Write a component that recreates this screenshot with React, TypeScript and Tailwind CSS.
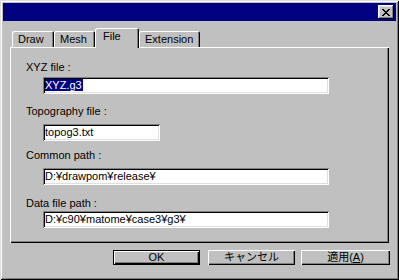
import React from "react";

const tabs = [
  { label: "Draw", w: "w-[42px]", active: false },
  { label: "Mesh", w: "w-[41px]", active: false },
  { label: "File", w: "w-[44px]", active: true },
  { label: "Extension", w: "w-[61px]", active: false },
];

const xPixels = [
  "##....##",
  ".##..##.",
  "..####..",
  "...##...",
  "..####..",
  ".##..##.",
  "##....##",
];

function CloseGlyph() {
  return (
    <svg width="8" height="7" viewBox="0 0 8 7" shapeRendering="crispEdges">
      {xPixels.flatMap((row, y) =>
        row.split("").map((c, x) =>
          c === "#" ? <rect key={`${x}-${y}`} x={x} y={y} width="1" height="1" fill="#000" /> : null
        )
      )}
    </svg>
  );
}

function Field({ value, width, selected }: { value: string; width: string; selected?: boolean }) {
  return (
    <div
      className={`ml-[33px] h-[17px] ${width} bg-white pl-[2px] pt-[2px] text-[11px] leading-[13px] text-black shadow-[inset_1px_1px_#808080,inset_-1px_-1px_#fff,inset_2px_2px_#000,inset_-2px_-2px_#dfdfdf]`}
    >
      {selected ? <span className="bg-[#000080] pr-[1px] text-white">{value}</span> : value}
    </div>
  );
}

function Label({ children, className = "" }: { children: React.ReactNode; className?: string }) {
  return <p className={`ml-[16px] text-[11px] leading-[14px] text-black ${className}`}>{children}</p>;
}

function Button({
  children,
  className,
  isDefault,
}: {
  children: React.ReactNode;
  className: string;
  isDefault?: boolean;
}) {
  return (
    <button
      className={`block h-[15px] ${className} bg-[#c0c0c0] p-0 text-center text-[11px] leading-[15px] text-black ${
        isDefault
          ? "shadow-[inset_0_0_0_1px_#000,inset_2px_2px_#fff,inset_-2px_-2px_#000,inset_-3px_-3px_#808080]"
          : "shadow-[inset_1px_1px_#fff,inset_-1px_-1px_#000,inset_-2px_-2px_#808080]"
      }`}
    >
      {children}
    </button>
  );
}

export default function App() {
  return (
    <div className="flex h-[280px] w-[399px] flex-col bg-[#c0c0c0] p-[3px] font-['Liberation_Sans','Noto_Sans_CJK_JP',sans-serif] shadow-[inset_1px_1px_#dfdfdf,inset_-1px_-1px_#000,inset_2px_2px_#fff,inset_-2px_-2px_#808080]">
      <div className="flex h-[18px] items-start justify-end bg-[#000080] pr-[2px] pt-[2px]">
        <div className="flex h-[14px] w-[16px] items-center justify-center bg-[#c0c0c0] shadow-[inset_-1px_-1px_#000,inset_1px_1px_#fff,inset_-2px_-2px_#808080,inset_2px_2px_#dfdfdf]">
          <CloseGlyph />
        </div>
      </div>

      <div className="ml-[7px] mt-[7px] w-[379px]">
        <div className="flex h-[19px] items-end pl-[2px]">
          {tabs.map((t) =>
            t.active ? (
              <div
                key={t.label}
                className={`relative z-10 mb-[-1px] h-[20px] ${t.w} rounded-t-[2px] bg-[#c0c0c0] pl-[8px] pt-[1px] text-[11px] leading-[14px] text-black shadow-[inset_1px_1px_#fff,inset_-1px_0_#000,inset_-2px_0_#808080]`}
              >
                {t.label}
              </div>
            ) : (
              <div
                key={t.label}
                className={`h-[16px] ${t.w} rounded-t-[2px] bg-[#c0c0c0] pl-[6px] pt-[1px] text-[11px] leading-[14px] text-black shadow-[inset_1px_1px_#fff,inset_-1px_0_#000,inset_-2px_0_#808080]`}
              >
                {t.label}
              </div>
            )
          )}
        </div>

        <div className="flex h-[196px] flex-col pt-[13px] shadow-[inset_1px_1px_#fff,inset_-1px_-1px_#000,inset_-2px_-2px_#808080]">
          <Label>XYZ file :</Label>
          <div className="mt-[3px]">
            <Field value="XYZ.g3" width="w-[286px]" selected />
          </div>
          <Label className="mt-[10px]">Topography file :</Label>
          <div className="mt-[6px]">
            <Field value="topog3.txt" width="w-[117px]" />
          </div>
          <Label className="mt-[7px]">Common path :</Label>
          <div className="mt-[6px]">
            <Field value="D:¥drawpom¥release¥" width="w-[286px]" />
          </div>
          <Label className="mt-[11px]">Data file path :</Label>
          <div className="mt-[1px]">
            <Field value="D:¥c90¥matome¥case3¥g3¥" width="w-[286px]" />
          </div>
        </div>
      </div>

      <div className="mt-[7px] flex items-start justify-end pr-[6px]">
        <Button className="w-[87px]" isDefault>
          OK
        </Button>
        <Button className="ml-[8px] w-[87px]">キャンセル</Button>
        <Button className="ml-[6px] w-[89px]">
          適用(<span className="underline">A</span>)
        </Button>
      </div>
    </div>
  );
}
